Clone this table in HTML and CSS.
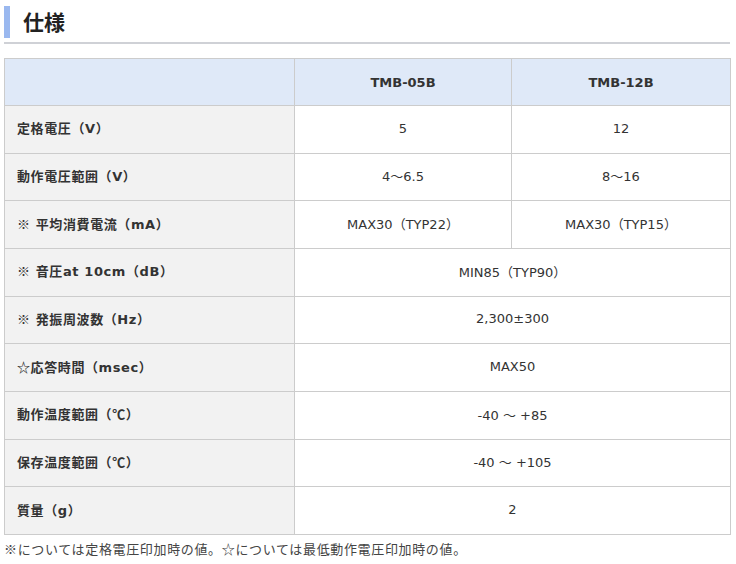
FILE: index.html
```html
<!DOCTYPE html>
<html lang="ja">
<head>
<meta charset="utf-8">
<link rel="stylesheet" href="styles.css">
</head>
<body>
<div class="page">
  <h2 class="title"><span class="title-text">仕様</span></h2>
  <table class="spec">
    <colgroup><col class="c1"><col class="c2"><col class="c3"></colgroup>
    <thead>
      <tr><th class="corner"></th><th>TMB-05B</th><th>TMB-12B</th></tr>
    </thead>
    <tbody>
      <tr><th>定格電圧（V）</th><td>5</td><td>12</td></tr>
      <tr><th>動作電圧範囲（V）</th><td>4～6.5</td><td>8～16</td></tr>
      <tr><th><span class="cjk">※</span> 平均消費電流（mA）</th><td>MAX30（TYP22）</td><td>MAX30（TYP15）</td></tr>
      <tr><th><span class="cjk">※</span> 音圧at 10cm（dB）</th><td colspan="2">MIN85（TYP90）</td></tr>
      <tr><th><span class="cjk">※</span> 発振周波数（Hz）</th><td colspan="2">2,300±300</td></tr>
      <tr><th><span class="cjk">☆</span>応答時間（msec）</th><td colspan="2">MAX50</td></tr>
      <tr><th>動作温度範囲（<span class="cjk">℃</span>）</th><td colspan="2">-40 ～ +85</td></tr>
      <tr><th>保存温度範囲（<span class="cjk">℃</span>）</th><td colspan="2">-40 ～ +105</td></tr>
      <tr><th>質量（g）</th><td colspan="2">2</td></tr>
    </tbody>
  </table>
  <p class="note">※については定格電圧印加時の値。☆については最低動作電圧印加時の値。</p>
</div>
</body>
</html>
```
FILE: styles.css
```css
html, body {
  margin: 0;
  padding: 0;
  background: #fff;
}
body {
  font-family: "DejaVu Sans", "Noto Sans CJK JP", sans-serif;
  color: #333;
  font-size: 13px;
}
.cjk {
  font-family: "Noto Sans CJK JP", sans-serif;
}
.page {
  padding: 6px 6px 0 4px;
}
.title {
  margin: 0;
  height: 36px;
  border-bottom: 2px solid #cfd1d6;
  display: flex;
  align-items: flex-start;
}
.title-text {
  display: block;
  border-left: 6px solid #9ab8ef;
  height: 32px;
  line-height: 30px;
  padding-left: 13px;
  font-family: "Noto Sans CJK JP", sans-serif;
  font-size: 21px;
  font-weight: bold;
  color: #222;
}
.spec {
  margin-top: 14px;
  width: 726px;
  border-collapse: collapse;
  table-layout: fixed;
}
.c1 { width: 290px; }
.c2 { width: 217px; }
.c3 { width: 219px; }
.spec th, .spec td {
  border: 1px solid #cccccc;
  padding: 0 12px;
  font-size: 13px;
}
.spec thead th {
  background: #dfe9f8;
  height: 46px;
  text-align: center;
  font-weight: bold;
  color: #333;
}
.spec tbody tr {
  height: 47.67px;
}
.spec tbody th {
  background: #f2f2f2;
  text-align: left;
  font-weight: bold;
  color: #333;
  letter-spacing: 0.6px;
  padding-bottom: 3px;
}
.spec tbody td {
  text-align: center;
  color: #333;
  padding-bottom: 2px;
}
.note {
  margin: 5px 0 0 0;
  font-family: "Noto Sans CJK JP", sans-serif;
  font-size: 13px;
  color: #444;
  line-height: 18px;
  letter-spacing: 0.65px;
}
```
